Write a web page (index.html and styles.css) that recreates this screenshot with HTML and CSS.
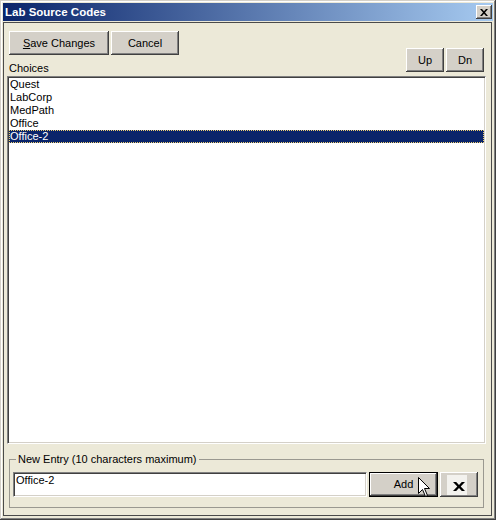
FILE: index.html
```html
<!DOCTYPE html>
<html>
<head>
<meta charset="utf-8">
<link rel="stylesheet" href="styles.css">
</head>
<body>
<div class="window">
  <div class="titlebar">
    <span class="title">Lab Source Codes</span>
    <div class="close">
      <svg width="8" height="7" viewBox="0 0 8 7"><path d="M0 0h2l2 2.2L6 0h2L5 3.5 8 7H6L4 4.8 2 7H0l3-3.5z" fill="#000"/></svg>
    </div>
  </div>
  <div class="client">
    <div class="header">
      <div class="left">
        <div class="btnrow">
          <div class="btn save"><span class="ul">S</span>ave Changes</div>
          <div class="btn cancel">Cancel</div>
        </div>
        <div class="label">Choices</div>
      </div>
      <div class="updn">
        <div class="btn small">Up</div>
        <div class="btn small">Dn</div>
      </div>
    </div>
    <div class="list">
      <div class="item">Quest</div>
      <div class="item">LabCorp</div>
      <div class="item">MedPath</div>
      <div class="item">Office</div>
      <div class="item sel">Office-2</div>
    </div>
    <fieldset class="entry">
      <legend>New Entry (10 characters maximum)</legend>
      <div class="entryrow">
        <div class="input">Office-2</div>
        <div class="btn add">Add</div>
        <div class="btn del">
          <svg width="20" height="20" viewBox="0 0 20 20">
            <rect x="0" y="0" width="20" height="20" fill="#f3f2ee"/>
            <path d="M6 7h3.2L12 10l2.8-3H18l-4.3 4.5L18 16h-3.2L12 13l-2.8 3H6l4.3-4.5z" fill="#000"/>
          </svg>
        </div>
      </div>
    </fieldset>
  </div>
  <svg class="cursor" width="13" height="21" viewBox="0 0 13 21">
    <path d="M0.5 0.5 L0.5 16.5 L4.5 12.5 L7.5 19.5 L9.5 18.5 L6.5 11.5 L11.5 11.5 Z" fill="#fff" stroke="#000" stroke-width="1" stroke-linejoin="miter"/>
  </svg>
</div>
</body>
</html>
```

FILE: styles.css
```css
html, body {
  margin: 0;
  padding: 0;
  background: #ece9d8;
}

body {
  font-family: "Liberation Sans", Arial, sans-serif;
  font-size: 11px;
  color: #000;
}

.window {
  position: relative;
  width: 496px;
  height: 520px;
  box-sizing: border-box;
  padding: 3px;
  background: #ece9d8;
  box-shadow: inset -1px -1px 0 #404040, inset 1px 1px 0 #d4d0c8,
              inset -2px -2px 0 #808080, inset 2px 2px 0 #fff;
  display: flex;
  flex-direction: column;
}

.titlebar {
  height: 18px;
  flex: none;
  display: flex;
  align-items: center;
  padding-left: 2px;
  background: linear-gradient(to right, #0a246a, #a6caf0);
  color: #fff;
}

.title {
  font-weight: bold;
  font-size: 11.5px;
  line-height: 14px;
}

.close {
  margin-left: auto;
  margin-right: 1px;
  width: 16px;
  height: 14px;
  box-sizing: border-box;
  background: #d4d0c8;
  box-shadow: inset -1px -1px 0 #404040, inset 1px 1px 0 #fff,
              inset -2px -2px 0 #808080;
  display: flex;
  align-items: center;
  justify-content: center;
}

.close svg {
  display: block;
  margin-left: -1px;
}

.client {
  margin-top: 1px;
  width: 489px;
  height: 494px;
  box-sizing: border-box;
  border: 1px solid #4a4a4a;
  background: #ece9d8;
}

.header {
  height: 53px;
  display: flex;
  justify-content: space-between;
  padding: 0 7px 0 5px;
}

.left {
  padding-top: 8px;
}

.btnrow {
  display: flex;
  gap: 2px;
}

.btn {
  height: 24px;
  box-sizing: border-box;
  background: #d4d0c8;
  box-shadow: inset -1px -1px 0 #404040, inset 1px 1px 0 #fff,
              inset -2px -2px 0 #808080;
  display: flex;
  align-items: center;
  justify-content: center;
  line-height: 13px;
}

.save {
  width: 100px;
}

.cancel {
  width: 68px;
}

.ul {
  text-decoration: underline;
}

.label {
  margin-top: 7px;
  line-height: 13px;
}

.updn {
  align-self: flex-end;
  margin-bottom: 4px;
  display: flex;
  gap: 2px;
}

.small {
  width: 38px;
}

.list {
  margin-left: 3px;
  width: 479px;
  height: 368px;
  box-sizing: border-box;
  background: #fff;
  border-style: solid;
  border-width: 1px;
  border-color: #808080 #fff #fff #808080;
  box-shadow: inset 1px 1px 0 #404040, inset -1px -1px 0 #d4d0c8;
  padding: 1px;
}

.item {
  height: 13px;
  line-height: 13px;
  padding-left: 1px;
  white-space: nowrap;
}

.item.sel {
  background: #0a246a;
  color: #fff;
  outline: 1px dotted #f0d070;
  outline-offset: -1px;
}

.entry {
  margin: 9px 0 0 5px;
  width: 475px;
  box-sizing: border-box;
  border: 1px solid #9a9890;
  padding: 6px 5px 10px 3px;
  min-width: 0;
}

.entry legend {
  margin-left: 3px;
  padding: 0 2px;
  line-height: 13px;
  font-size: 11px;
}

.entryrow {
  display: flex;
  gap: 2px;
  height: 25px;
}

.input {
  flex: 1;
  height: 25px;
  box-sizing: border-box;
  background: #fff;
  border-style: solid;
  border-width: 1px;
  border-color: #808080 #fff #fff #808080;
  box-shadow: inset 1px 1px 0 #404040, inset -1px -1px 0 #d4d0c8;
  padding: 1px 2px;
  line-height: 13px;
}

.add {
  width: 69px;
  height: 25px;
  border: 1px solid #000;
}

.del {
  width: 38px;
  height: 25px;
  padding-right: 4px;
}

.del svg {
  display: block;
}

.cursor {
  position: absolute;
  left: 418px;
  top: 477px;
}
```
